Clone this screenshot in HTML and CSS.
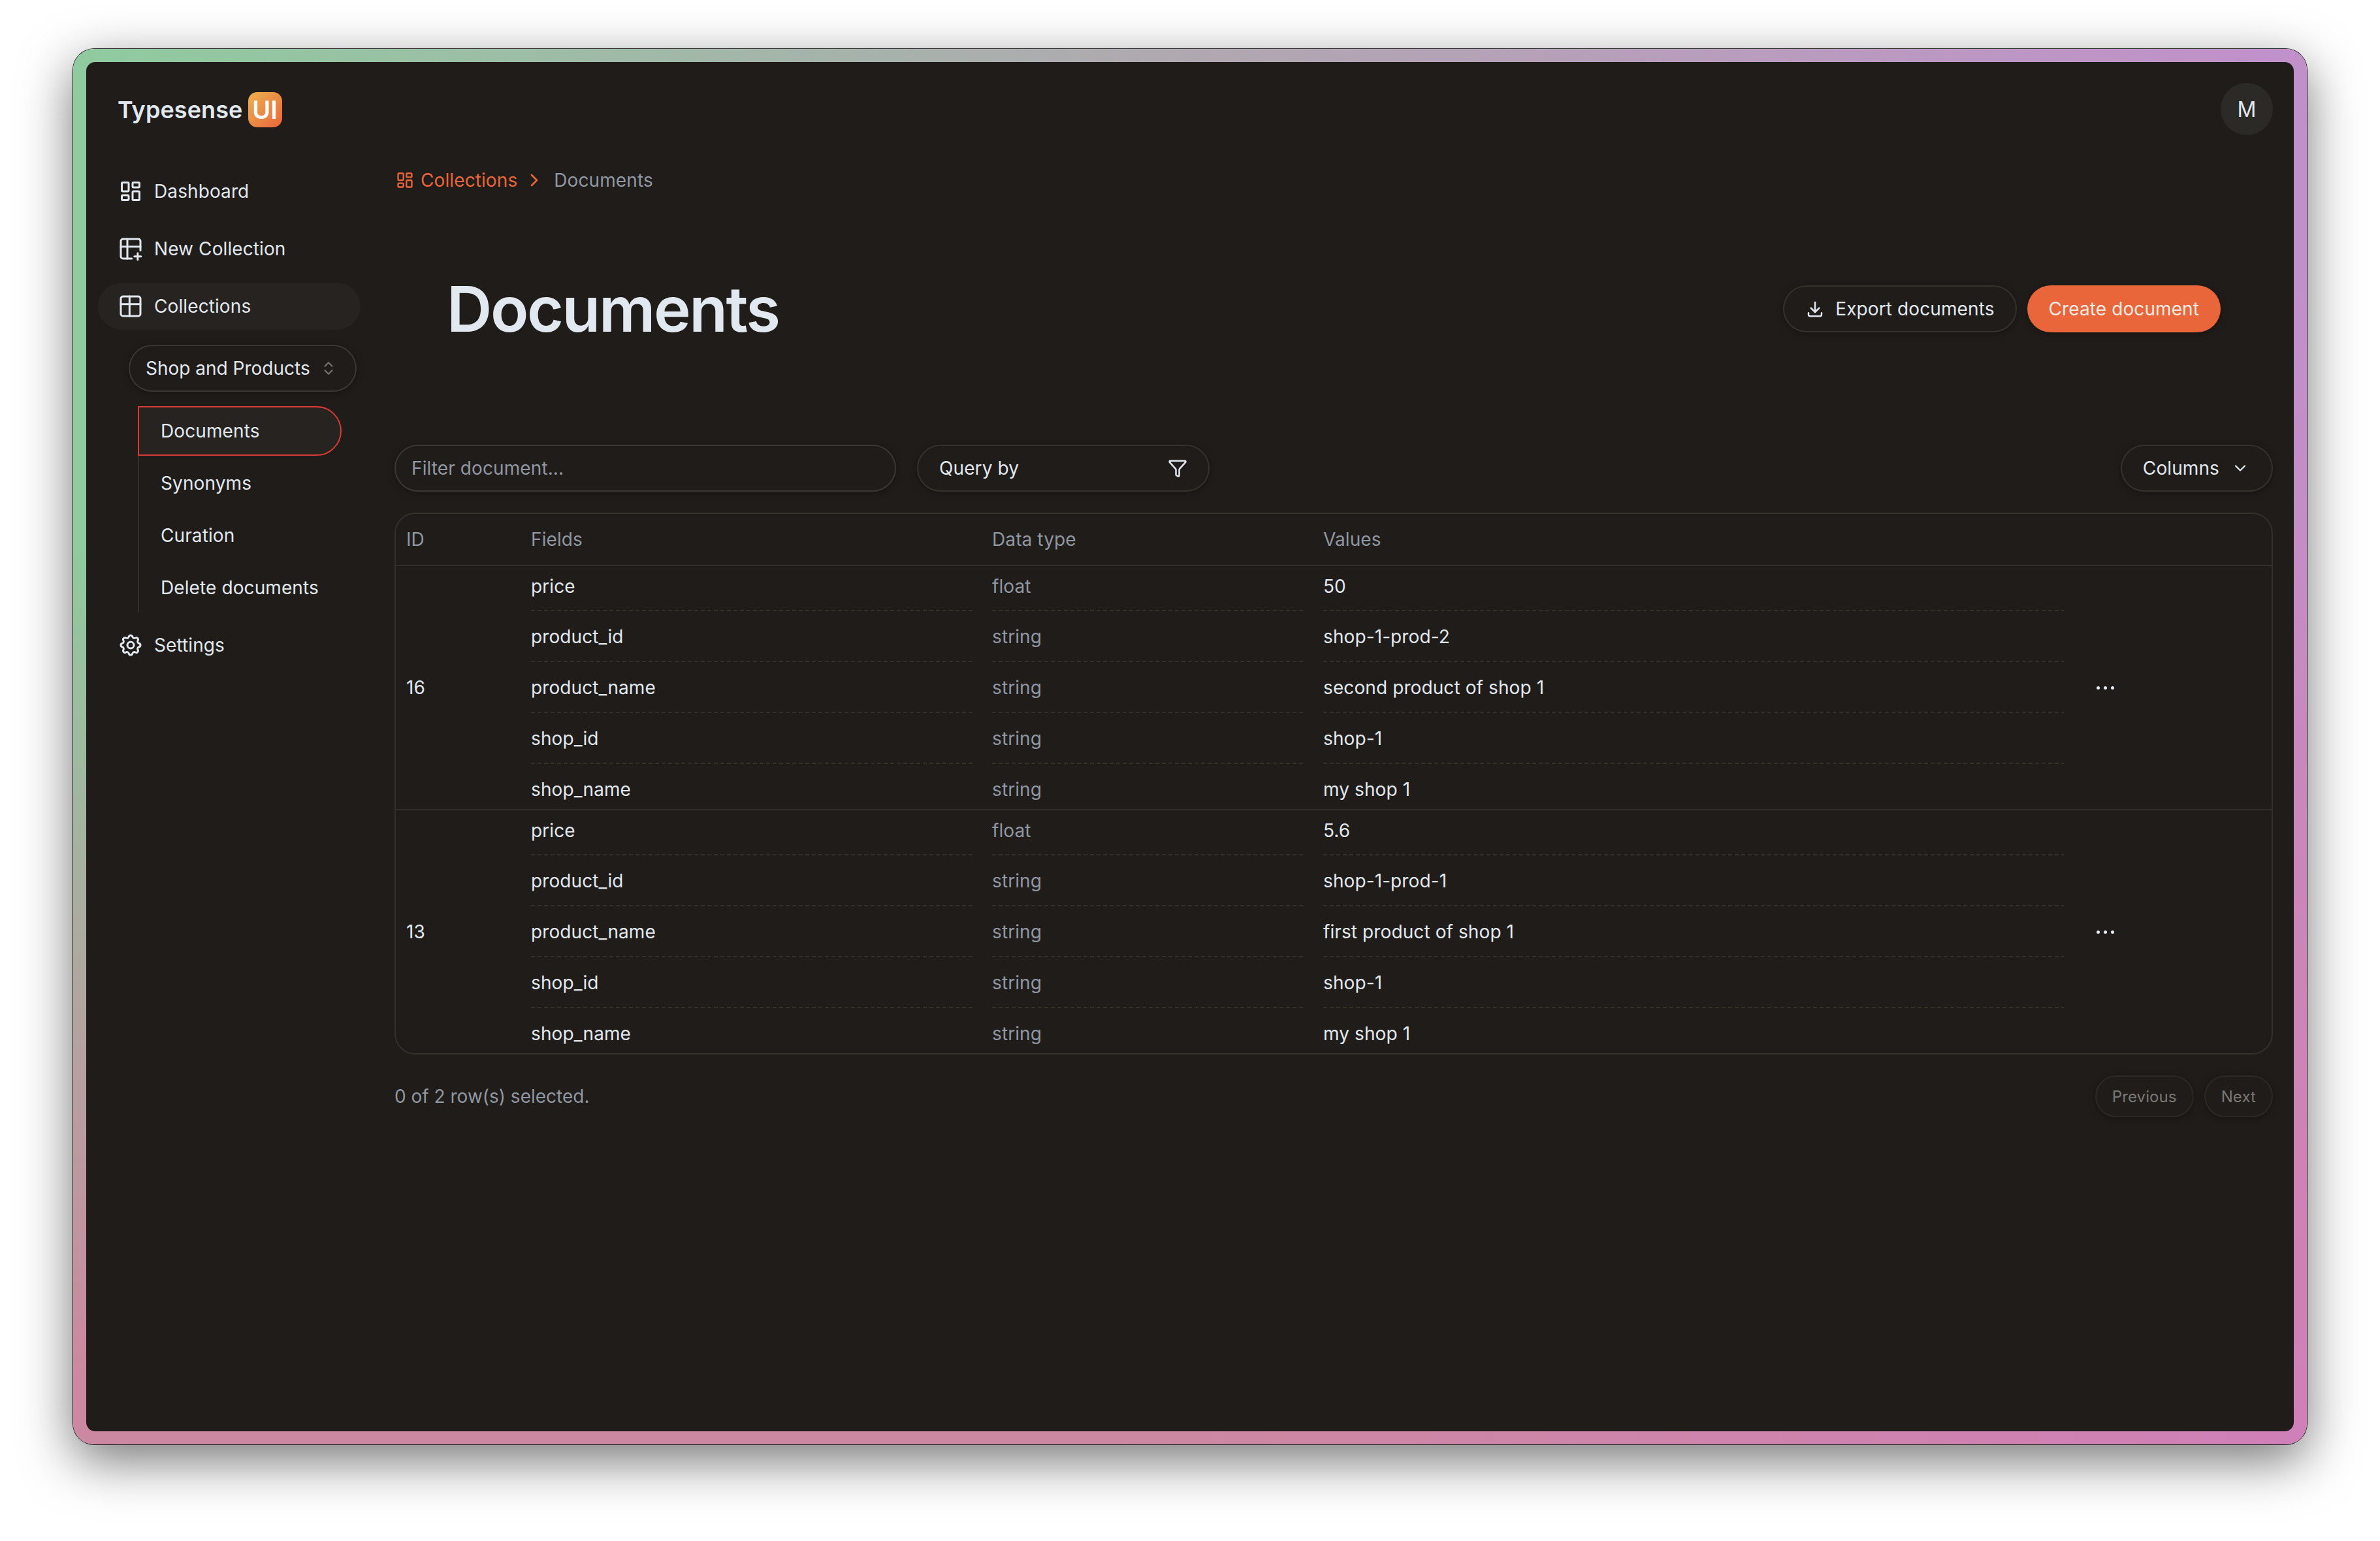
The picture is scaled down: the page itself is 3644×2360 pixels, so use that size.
FILE: index.html
```html
<!DOCTYPE html>
<html lang="en">

<head>
	<meta charset="UTF-8">
	<title>Typesense UI - Documents</title>
	<link rel="stylesheet" href="styles.css">
</head>

<body>
	<div class="window">
		<div class="app">
			<header class="topbar">
				<div class="logo">Typesense <span class="logo-badge">UI</span></div>
				<div class="avatar">M</div>
			</header>
			<div class="content">
				<nav class="sidebar">
					<a class="nav-item">
						<span class="icon-slot">
							<svg class="icon-dash" viewBox="0 0 24 24"><rect x="3" y="3" width="7" height="9" rx="1"/><rect x="14" y="3" width="7" height="5" rx="1"/><rect x="14" y="12" width="7" height="9" rx="1"/><rect x="3" y="16" width="7" height="5" rx="1"/></svg>
						</span>
						Dashboard
					</a>
					<a class="nav-item">
						<span class="icon-slot">
							<svg class="icon" viewBox="0 0 24 24"><path d="M13 21H5a2 2 0 0 1-2-2V5a2 2 0 0 1 2-2h14a2 2 0 0 1 2 2v8.5"/><path d="M3 10h18"/><path d="M9 3v18"/><path d="M15.5 19h6"/><path d="M18.5 16v6"/></svg>
						</span>
						New Collection
					</a>
					<a class="nav-item active">
						<span class="icon-slot">
							<svg class="icon" viewBox="0 0 24 24"><rect x="3" y="3" width="18" height="18" rx="2"/><path d="M3 10h18"/><path d="M11 3v18"/></svg>
						</span>
						Collections
					</a>
					<button class="collection-select">
						Shop and Products
						<svg class="icon-sm" viewBox="0 0 24 24"><path d="m7 15 5 5 5-5"/><path d="m7 9 5-5 5 5"/></svg>
					</button>
					<div class="subnav">
						<a class="subnav-item current">Documents</a>
						<a class="subnav-item">Synonyms</a>
						<a class="subnav-item">Curation</a>
						<a class="subnav-item">Delete documents</a>
					</div>
					<a class="nav-item">
						<span class="icon-slot">
							<svg class="icon" viewBox="0 0 24 24"><path d="M10.325 4.317c.426 -1.756 2.924 -1.756 3.35 0a1.724 1.724 0 0 0 2.573 1.066c1.543 -.94 3.31 .826 2.37 2.37a1.724 1.724 0 0 0 1.065 2.572c1.756 .426 1.756 2.924 0 3.35a1.724 1.724 0 0 0 -1.066 2.573c.94 1.543 -.826 3.31 -2.37 2.37a1.724 1.724 0 0 0 -2.572 1.065c-.426 1.756 -2.924 1.756 -3.35 0a1.724 1.724 0 0 0 -2.573 -1.066c-1.543 .94 -3.31 -.826 -2.37 -2.37a1.724 1.724 0 0 0 -1.065 -2.572c-1.756 -.426 -1.756 -2.924 0 -3.35a1.724 1.724 0 0 0 1.066 -2.573c-.94 -1.543 .826 -3.31 2.37 -2.37c1 .608 2.296 .07 2.572 -1.065z"/><circle cx="12" cy="12" r="3"/></svg>
						</span>
						Settings
					</a>
				</nav>

				<main class="main">
					<div class="breadcrumb">
						<a class="crumb-link">
							<svg class="icon-crumb" viewBox="0 0 24 24"><rect x="3" y="3" width="7" height="9" rx="1"/><rect x="14" y="3" width="7" height="5" rx="1"/><rect x="14" y="12" width="7" height="9" rx="1"/><rect x="3" y="16" width="7" height="5" rx="1"/></svg>
							Collections
						</a>
						<svg class="crumb-sep" viewBox="0 0 24 24"><path d="m9 18 6-6-6-6"/></svg>
						<span class="crumb-current">Documents</span>
					</div>

					<div class="page-head">
						<h1>Documents</h1>
						<div class="page-actions">
							<button class="btn">
								<svg class="icon-btn" viewBox="0 0 24 24"><path d="M4 17v2a2 2 0 0 0 2 2h12a2 2 0 0 0 2-2v-2"/><path d="m7 11 5 5 5-5"/><path d="M12 4v12"/></svg>
								Export documents
							</button>
							<button class="btn primary">Create document</button>
						</div>
					</div>

					<div class="toolbar">
						<div class="filter-input">Filter document...</div>
						<button class="btn query-by">
							Query by
							<svg class="icon-btn" viewBox="0 0 24 24"><path d="M10 20a1 1 0 0 0 .553.895l2 1A1 1 0 0 0 14 21v-7a2 2 0 0 1 .517-1.341L21.74 4.67A1 1 0 0 0 21 3H3a1 1 0 0 0-.742 1.67l7.225 7.989A2 2 0 0 1 10 14z"/></svg>
						</button>
						<button class="btn columns">
							Columns
							<svg class="icon-chevron" viewBox="0 0 24 24"><path d="m6 9 6 6 6-6"/></svg>
						</button>
					</div>

					<div class="table">
						<div class="table-head">
							<div>ID</div>
							<div>Fields</div>
							<div>Data type</div>
							<div>Values</div>
						</div>

						<div class="doc-row">
							<div class="doc-id">16</div>
							<div class="doc-fields">
								<div class="field-row"><div>price</div><div class="type">float</div><div>50</div></div>
								<div class="field-row"><div>product_id</div><div class="type">string</div><div>shop-1-prod-2</div></div>
								<div class="field-row"><div>product_name</div><div class="type">string</div><div>second product of shop 1</div></div>
								<div class="field-row"><div>shop_id</div><div class="type">string</div><div>shop-1</div></div>
								<div class="field-row"><div>shop_name</div><div class="type">string</div><div>my shop 1</div></div>
							</div>
							<div class="doc-actions"><span class="dots"><i></i><i></i><i></i></span></div>
						</div>

						<div class="doc-row">
							<div class="doc-id">13</div>
							<div class="doc-fields">
								<div class="field-row"><div>price</div><div class="type">float</div><div>5.6</div></div>
								<div class="field-row"><div>product_id</div><div class="type">string</div><div>shop-1-prod-1</div></div>
								<div class="field-row"><div>product_name</div><div class="type">string</div><div>first product of shop 1</div></div>
								<div class="field-row"><div>shop_id</div><div class="type">string</div><div>shop-1</div></div>
								<div class="field-row"><div>shop_name</div><div class="type">string</div><div>my shop 1</div></div>
							</div>
							<div class="doc-actions"><span class="dots"><i></i><i></i><i></i></span></div>
						</div>
					</div>

					<div class="table-foot">
						<div class="selected-count">0 of 2 row(s) selected.</div>
						<div class="pager">
							<button class="btn small">Previous</button>
							<button class="btn small">Next</button>
						</div>
					</div>
				</main>
			</div>
		</div>
	</div>
</body>

</html>
```

FILE: styles.css
```css
html,
body {
	height: 100%;
}

body {
	margin: 0;
	box-sizing: border-box;
	padding: 75px 112px 148px 112px;
	background: #fff;
	font-family: Inter, "Liberation Sans", sans-serif;
	font-size: 28px;
	letter-spacing: .1px;
	color: #e2e8f0;
}

button {
	font: inherit;
	letter-spacing: inherit;
	color: inherit;
}

svg {
	fill: none;
	stroke: currentColor;
	stroke-width: 2;
	stroke-linecap: round;
	stroke-linejoin: round;
	flex: none;
}

.window {
	box-sizing: border-box;
	height: 100%;
	padding: 20px;
	border-radius: 32px;
	background:
		radial-gradient(circle at 100% 100%, #d080b8, transparent 45%),
		linear-gradient(180deg, transparent 35%, #cc88a0 95%),
		linear-gradient(90deg, #8fcb9f 0%, #b0a8b0 50%, #c190cb 100%);
	box-shadow: 0 0 0 1px #222, 0 24px 80px rgba(0, 0, 0, .55);
}

.app {
	display: flex;
	flex-direction: column;
	height: 100%;
	border-radius: 14px;
	background: #1f1c19;
}

.topbar {
	display: flex;
	justify-content: space-between;
	align-items: center;
	height: 144px;
	padding: 0 32px 0 48px;
	flex: none;
}

.logo {
	display: flex;
	align-items: center;
	gap: 8px;
	margin-top: 2px;
	font-size: 36px;
	font-weight: 600;
}

.logo-badge {
	display: flex;
	align-items: center;
	justify-content: center;
	width: 52px;
	height: 54px;
	border-radius: 14px;
	background: linear-gradient(135deg, #ecb14f, #e9663a);
	color: #fff;
	font-size: 38px;
}

.avatar {
	display: flex;
	align-items: center;
	justify-content: center;
	width: 80px;
	height: 80px;
	border-radius: 50%;
	background: #2c2a27;
	font-size: 32px;
}

.content {
	display: flex;
	flex: 1;
}

.sidebar {
	display: flex;
	flex-direction: column;
	gap: 16px;
	box-sizing: border-box;
	width: 472px;
	padding: 18px 0 0 18px;
	flex: none;
}

.nav-item {
	display: flex;
	align-items: center;
	gap: 16px;
	box-sizing: border-box;
	width: 402px;
	height: 72px;
	padding-left: 30px;
	border-radius: 36px;
}

.nav-item.active {
	background: #262320;
}

.icon-slot {
	display: flex;
	align-items: center;
	justify-content: center;
	width: 40px;
	height: 40px;
	stroke-width: 1.8;
}

.icon {
	width: 40px;
	height: 40px;
	stroke-width: 1.8;
}

.icon-dash {
	width: 36px;
	height: 36px;
}

.collection-select {
	display: flex;
	align-items: center;
	justify-content: space-between;
	box-sizing: border-box;
	width: 349px;
	height: 72px;
	margin: 7px 0 0 47px;
	padding: 0 28px 0 24px;
	border: 2px solid #3a3734;
	border-radius: 36px;
	background: #1f1c19;
	letter-spacing: 0;
	box-shadow: 0 2px 12px rgba(0, 0, 0, .3);
}

.icon-sm {
	width: 26px;
	height: 26px;
	color: #77746f;
}

.subnav {
	display: flex;
	flex-direction: column;
	gap: 4px;
	width: 310px;
	margin: 6px 0 -2px 61px;
	border-left: 2px solid #33302c;
}

.subnav-item {
	display: flex;
	align-items: center;
	box-sizing: border-box;
	height: 76px;
	padding-left: 33px;
}

.subnav-item.current {
	margin-left: -2px;
	border: 2px solid #d93a33;
	border-radius: 0 38px 38px 0;
	background: #262320;
}

.main {
	flex: 1;
	box-sizing: border-box;
	padding-right: 32px;
	min-width: 0;
}

.breadcrumb {
	display: flex;
	align-items: center;
	height: 40px;
	margin: 17px 0 0 2px;
	color: #9097a3;
}

.crumb-link {
	display: flex;
	align-items: center;
	gap: 10px;
	color: #e9663a;
}

.icon-crumb {
	width: 28px;
	height: 28px;
}

.crumb-sep {
	width: 32px;
	height: 32px;
	margin: 0 14px 0 10px;
	color: #e9663a;
}

.page-head {
	display: flex;
	justify-content: space-between;
	align-items: center;
	padding: 0 80px;
	margin-top: 117px;
	height: 120px;
}

h1 {
	margin: 0;
	font-size: 96px;
	font-weight: 600;
	letter-spacing: -2.4px;
}

.page-actions {
	display: flex;
	gap: 16px;
}

.btn {
	display: flex;
	align-items: center;
	gap: 16px;
	box-sizing: border-box;
	height: 72px;
	padding: 0 32px;
	border: 2px solid #35322e;
	border-radius: 36px;
	background: #1f1c19;
	box-shadow: 0 2px 12px rgba(0, 0, 0, .3);
}

.btn.primary {
	padding: 0 33px;
	border: none;
	background: #e9663a;
	color: #f5ebe5;
}

.icon-btn {
	width: 30px;
	height: 30px;
}

.icon-chevron {
	width: 28px;
	height: 28px;
}

.toolbar {
	display: flex;
	align-items: center;
	gap: 32px;
	margin-top: 148px;
}

.filter-input {
	display: flex;
	align-items: center;
	box-sizing: border-box;
	width: 768px;
	height: 72px;
	padding: 0 24px;
	border: 2px solid #3a3734;
	border-radius: 36px;
	color: #9097a3;
	box-shadow: 0 2px 12px rgba(0, 0, 0, .3);
}

.query-by {
	justify-content: space-between;
	width: 448px;
}

.columns {
	gap: 18px;
	margin-left: auto;
	padding-right: 34px;
}

.table {
	margin-top: 32px;
	border: 2px solid #33302c;
	border-radius: 32px;
}

.table-head {
	display: grid;
	grid-template-columns: 207px 706px 507px 1fr;
	align-items: center;
	height: 78px;
	border-bottom: 2px solid #33302c;
	color: #9097a3;
}

.table-head > div:first-child,
.doc-id {
	padding-left: 16px;
}

.doc-row {
	display: grid;
	grid-template-columns: 207px 1fr 288px;
	align-items: center;
}

.doc-row + .doc-row {
	border-top: 2px solid #33302c;
}

.doc-fields {
	display: flex;
	flex-direction: column;
}

.field-row {
	display: grid;
	grid-template-columns: 706px 507px 1fr;
	height: 78px;
}

.field-row:first-child,
.field-row:last-child {
	height: 69px;
}

.field-row > div {
	display: flex;
	align-items: center;
	margin-right: 30px;
	background: repeating-linear-gradient(90deg, #33302c 0 6px, transparent 6px 10px) bottom / 100% 2px no-repeat;
}

.field-row:first-child > div {
	padding-bottom: 8px;
}

.field-row:last-child > div {
	padding-top: 8px;
	background: none;
}

.field-row .type {
	color: #9097a3;
}

.doc-actions {
	display: flex;
	padding-left: 20px;
}

.dots {
	display: flex;
	gap: 6px;
}

.dots i {
	width: 5px;
	height: 5px;
	border-radius: 50%;
	background: #e8edf3;
}

.table-foot {
	display: flex;
	justify-content: space-between;
	align-items: center;
	margin-top: 32px;
}

.selected-count {
	letter-spacing: 0;
	color: #9097a3;
}

.pager {
	display: flex;
	gap: 16px;
}

.btn.small {
	height: 64px;
	padding: 0 24px;
	font-size: 24px;
	color: #7a7876;
	border-color: #2c2926;
}
```
